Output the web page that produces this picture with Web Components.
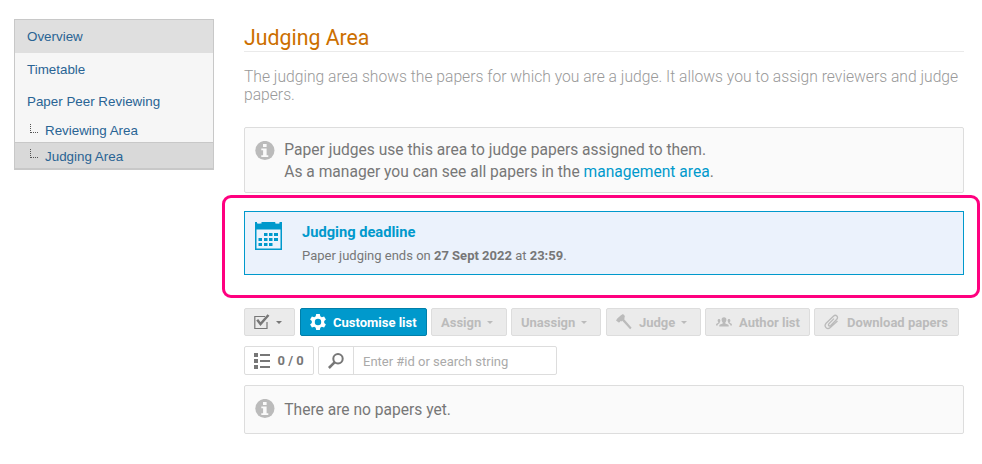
<!DOCTYPE html>
<html lang="en">
<head>
<meta charset="utf-8">
<title>Judging Area</title>
<style>
body{margin:0;background:#fff;font-family:Roboto,sans-serif;color:#777}
b{font-weight:700}
</style>
</head>
<body>
<judging-page></judging-page>
<script>
const define=(name,html)=>{
  const t=document.createElement('template');
  t.innerHTML=html;
  customElements.define(name,class extends HTMLElement{
    constructor(){super();this.attachShadow({mode:'open'}).append(t.content.cloneNode(true));}
  });
};

const icons={
  info:[20,20,'<circle cx="9.900" cy="9.500" r="9.600" fill="#bbb"/><path d="M8 3h3.600v3H8zM6.300 7.500h5.300v6.800h1.700V16H6.300v-1.700h1.800V9.300H6.300z" fill="#fafafa"/>'],
  calendar:[27,28,'<path fill="currentColor" fill-rule="evenodd" d="M0 0h2v1.200h3V0h15.500v1.200h3.500V0h3v28H0zM1.500 7.500V26.500h24V7.500z"/><path fill="#ebf2fc" d="M2.500 0h4v1.500h-4zM20.500 0h4v1.500h-4z"/><path fill="currentColor" d="M9 11h3.500v3H9zM14 11h3.500v3H14zM19 11h4v3h-4zM3.500 16H7v3H3.500zM9 16h3.500v3H9zM14 16h3.500v3H14zM19 16h4v3h-4zM3.500 21H7v3H3.500zM9 21h3.500v3H9zM14 21h3.500v3H14z"/>'],
  check:[17,16,'<path d="M13 8v6.500H.8V2.500H11" fill="none" stroke="currentColor" stroke-width="1.200"/><path d="M3.200 5.800 6.500 10 14.500 1" fill="none" stroke="currentColor" stroke-width="2.500"/>'],
  gear:[16,16,'<path fill="currentColor" fill-rule="evenodd" d="M6.200 0h3.600l.5 2.300 1.500.9 2.300-.8 1.800 3.100-1.700 1.600v1.800l1.700 1.600-1.800 3.100-2.300-.8-1.500.9-.5 2.300H6.200l-.5-2.300-1.500-.9-2.300.8L.1 10.500l1.700-1.600V7.100L.1 5.500l1.800-3.100 2.300.8 1.500-.9zM8 4.800a3.200 3.200 0 1 0 0 6.400 3.200 3.200 0 0 0 0-6.400z"/>'],
  hammer:[16,16,'<path fill="currentColor" d="M0 6.500 1.300 4.400 4.900 1.200 7 0l2.200 2.300-1 .8.700 1L8 5l7.600 8.700-1.500 1.600L6.300 6.700l-1 .8-.8-.6-.8 1.300-1 .2z"/>'],
  group:[16,10,'<path fill="currentColor" d="M8 .2c1.700 0 2.500 1.100 2.400 2.700-.1 1.100-.6 2-1.100 2.500v1l2.600 1.200c.7.400.9.900.9 2H3.200c0-1.100.2-1.600.9-2l2.600-1.200v-1c-.5-.5-1-1.400-1.100-2.500C5.500 1.300 6.300.2 8 .2zM3 2c.8 0 1.400.6 1.400 1.600 0 .8-.3 1.400-.7 1.800v.6l-1.600 1.200c-.5.400-.4 1-.4 1.300H0c0-1.300.2-1.700.9-2l1.400-.8v-.4c-.4-.4-.7-1-.7-1.700C1.600 2.600 2.200 2 3 2zM13 2c-.8 0-1.400.6-1.400 1.600 0 .8.300 1.400.7 1.800V6l1.600 1.200c.5.400.4 1 .4 1.300H16c0-1.300-.2-1.700-.9-2l-1.400-.8v-.4c.4-.4.7-1 .7-1.700C14.400 2.600 13.800 2 13 2z"/>'],
  clip:[15,16,'<path fill="none" stroke="currentColor" stroke-width="1.300" d="M10 4.600 4.900 9.800c-1.200 1.400.4 3 1.800 1.700l5.900-6c2.300-2.600-.6-5.700-3.200-3.300L2.100 9.300c-2.700 3.100 1 7 4.200 4.300L13.500 7"/>'],
  list:[16,16,'<path fill="currentColor" d="M0 0h4v4H0zM0 6h4v4H0zM0 12h4v4H0zM6 1h10v2H6zM6 7h10v2H6zM6 13h10v2H6z"/>'],
  search:[16,16,'<circle cx="10" cy="5.800" r="4.700" fill="none" stroke="currentColor" stroke-width="2"/><path d="M6.500 9.300.9 15" stroke="currentColor" stroke-width="2.500"/>'],
  branch:[8,10,'<path fill="none" stroke="#555" stroke-dasharray="1 1" d="M.5 0v9M1 8.500h7"/>']
};
customElements.define('ui-icon',class extends HTMLElement{
  connectedCallback(){
    const [w,h,body]=icons[this.getAttribute('name')];
    this.attachShadow({mode:'open'}).innerHTML=`<style>:host{display:block;flex:none}svg{display:block}</style><svg width="${w}" height="${h}" viewBox="0 0 ${w} ${h}">${body}</svg>`;
  }
});

define('nav-item',`<style>
:host{display:flex;box-sizing:border-box;height:32px;align-items:center;padding:2px 0 0 12px;color:#296494}
:host([first]){height:33px;padding-top:0;background:#dfdfdf}
:host([sub]){height:25px;padding:3px 0 0 15px;gap:7px}
:host([sub][active]){height:26px;padding-top:3px;background:#d9d9d9;border-top:1px solid #c8c8c8}
ui-icon{display:none}:host([sub]) ui-icon{display:block;margin-bottom:4px}
:host([active]) ui-icon{margin-bottom:6px!important}
</style><ui-icon name="branch"></ui-icon><span><slot></slot></span>`);

define('side-menu',`<style>
:host{display:block;box-sizing:border-box;width:200px;height:151px;border:1px solid #c8c8c8;border-bottom-width:2px;background:#f6f6f6;font:13.380px/18px "Liberation Sans",sans-serif}
</style><nav><slot></slot></nav>`);

define('info-box',`<style>
:host{display:flex;box-sizing:border-box;padding:11px 10px 9px;gap:9.300px;border:1px solid #ddd;border-radius:2px;background:#fafafa;font-size:15.590px;line-height:22px}
ui-icon{margin-top:2px}
</style><ui-icon name="info"></ui-icon><div><slot></slot></div>`);

define('deadline-box',`<style>
:host{display:flex;box-sizing:border-box;height:64px;margin-top:18px;padding:10px;gap:20px;border:1px solid #0099cc;background:#ebf2fc}
ui-icon{color:#09c}
h2{margin:0;font-size:14.680px;line-height:20px;font-weight:700;color:#09c}
p{margin:4px 0 0;font-size:13px;line-height:20px}
</style><ui-icon name="calendar"></ui-icon><div><h2><slot name="title"></slot></h2><p><slot></slot></p></div>`);

define('tool-button',`<style>
:host{display:flex;box-sizing:border-box;width:var(--w);height:28px;align-items:center;padding-left:9px;gap:7px;border:1px solid #ddd;border-radius:2px;background:#ebebeb;color:#bbb;font-size:13px;font-weight:700;white-space:nowrap}
:host([primary]){background:#09c;border-color:#007fa9;color:#fff}
:host([enabled]){color:#777}
:host([plain]){height:29px;background:#fff}
i{display:none;border:3.500px solid transparent;border-top-color:currentColor;border-bottom:0}
:host([menu]) i{display:block;margin-left:-1px}
:host([menu][enabled]) span{display:none}
:host([menu][enabled]) i{margin-left:-2px}
</style><slot name="icon"></slot><span><slot></slot></span><i></i>`);

define('search-field',`<style>
:host{display:flex;box-sizing:border-box;width:239px;height:29px;border:1px solid #ddd;border-radius:2px;color:#777;font-size:13px}
div{box-sizing:border-box;width:35px;padding:6px 0 0 9px;border-right:1px solid #ddd}
span{padding-left:9px;line-height:29px;color:#aaa}
</style><div><ui-icon name="search"></ui-icon></div><span><slot></slot></span>`);

define('focus-frame',`<style>
:host{position:absolute;box-sizing:border-box;left:222px;top:195px;width:758px;height:103px;border:3px solid #ff007f;border-radius:9px}
</style>`);

define('judging-page',`<style>
:host{display:flex;box-sizing:border-box;position:relative;height:464px;padding:19px 0 0 14px;gap:30px;overflow:hidden}
main{width:720px}
side-menu{flex:none}
h1{box-sizing:border-box;height:33px;margin:0 0 16px;padding-top:5px;border-bottom:1px solid #eaeaea;font-size:21.300px;line-height:27px;font-weight:400;color:#cc6f00}
.intro{margin:0 0 23px;height:36px;font-size:15.670px;line-height:18px;font-weight:300;color:#999}
.top{height:66px}
.link{color:#09c}
.bar{display:flex;margin-top:33px}
.second{margin-top:10px;gap:4px}
.bottom{height:49px;margin-top:10px}
.five{margin-right:5px}.four{margin-right:4px}
b{font-weight:700}
</style>
<side-menu>
<nav-item first>Overview</nav-item><nav-item>Timetable</nav-item><nav-item>Paper Peer Reviewing</nav-item>
<nav-item sub>Reviewing Area</nav-item><nav-item sub active>Judging Area</nav-item>
</side-menu>
<main>
<h1>Judging Area</h1>
<p class="intro">The judging area shows the papers for which you are a judge. It allows you to assign reviewers and judge papers.</p>
<info-box class="top">Paper judges use this area to judge papers assigned to them.<br>As a manager you can see all papers in the <span class="link">management area</span>.</info-box>
<deadline-box><span slot="title">Judging deadline</span>Paper judging ends on <b>27 Sept 2022</b> at <b>23:59</b>.</deadline-box>
<div class="bar">
<tool-button class="five" enabled menu style="--w:51px"><ui-icon slot="icon" name="check"></ui-icon></tool-button>
<tool-button class="four" primary style="--w:127px"><ui-icon slot="icon" name="gear"></ui-icon>Customise list</tool-button>
<tool-button class="four" menu style="--w:76px">Assign</tool-button>
<tool-button class="five" menu style="--w:90px">Unassign</tool-button>
<tool-button class="four" menu style="--w:95px"><ui-icon slot="icon" name="hammer"></ui-icon>Judge</tool-button>
<tool-button class="four" style="--w:105px"><ui-icon slot="icon" name="group" style="margin-left:1px"></ui-icon>Author list</tool-button>
<tool-button style="--w:145px;gap:8px"><ui-icon slot="icon" name="clip"></ui-icon>Download papers</tool-button>
</div>
<div class="bar second">
<tool-button plain enabled style="--w:70px;gap:7.500px"><ui-icon slot="icon" name="list"></ui-icon>0 / 0</tool-button>
<search-field>Enter #id or search string</search-field>
</div>
<info-box class="bottom"><div style="padding-top:2px">There are no papers yet.</div></info-box>
</main>
<focus-frame></focus-frame>`);
</script>
</body>
</html>
